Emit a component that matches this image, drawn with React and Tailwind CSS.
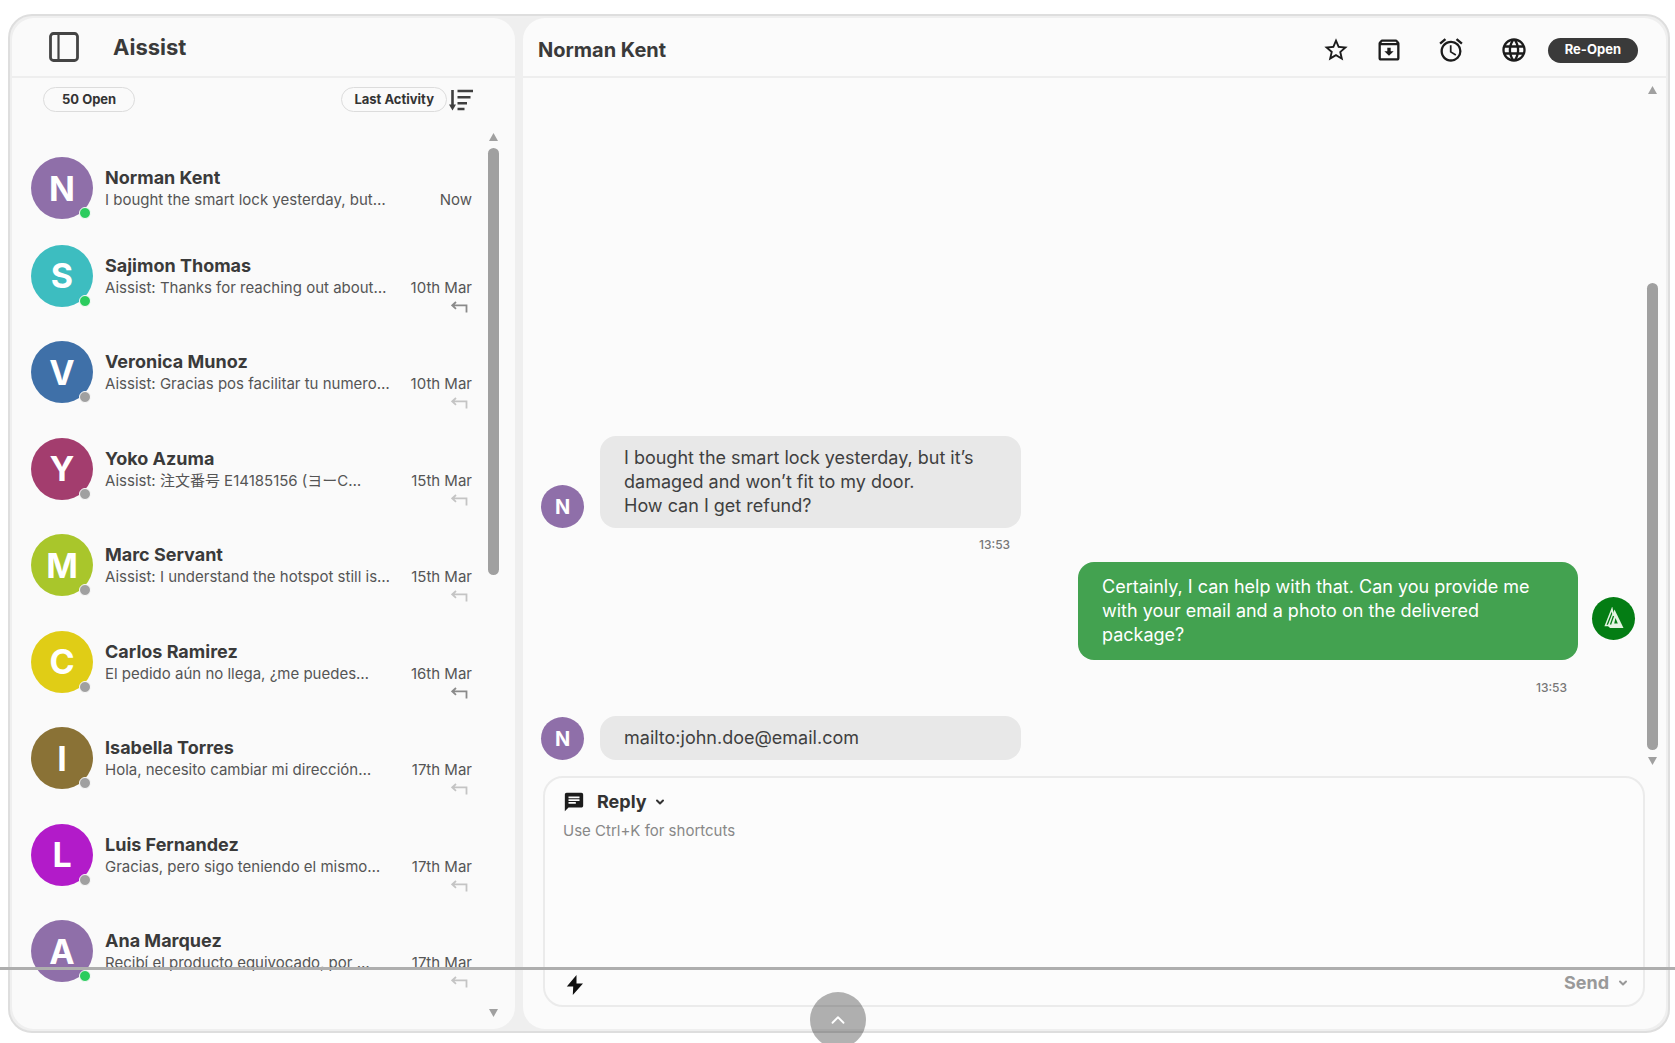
import { MdStarOutline, MdOutlineArchive, MdAlarm, MdLanguage, MdChat } from "react-icons/md";
import { ChevronDown, ChevronUp } from "lucide-react";

const conversations = [
  { name: "Norman Kent", preview: "I bought the smart lock yesterday, but…", date: "Now", color: "bg-[#8f6fa9]", online: true },
  { name: "Sajimon Thomas", preview: "Aissist: Thanks for reaching out about…", date: "10th Mar", color: "bg-[#3dbdc0]", online: true, reply: "text-[#8a8a8a]" },
  { name: "Veronica Munoz", preview: "Aissist: Gracias pos facilitar tu numero…", date: "10th Mar", color: "bg-[#3f70a8]", reply: "text-[#c4c4c4]" },
  { name: "Yoko Azuma", preview: "Aissist: 注文番号 E14185156 (ヨーC…", date: "15th Mar", color: "bg-[#a33d6e]", reply: "text-[#c4c4c4]" },
  { name: "Marc Servant", preview: "Aissist: I understand the hotspot still is…", date: "15th Mar", color: "bg-[#a9c62b]", reply: "text-[#c4c4c4]" },
  { name: "Carlos Ramirez", preview: "El pedido aún no llega, ¿me puedes…", date: "16th Mar", color: "bg-[#e0cd16]", reply: "text-[#8a8a8a]" },
  { name: "Isabella Torres", preview: "Hola, necesito cambiar mi dirección…", date: "17th Mar", color: "bg-[#8a7236]", reply: "text-[#c4c4c4]" },
  { name: "Luis Fernandez", preview: "Gracias, pero sigo teniendo el mismo…", date: "17th Mar", color: "bg-[#b21bc9]", reply: "text-[#c4c4c4]" },
  { name: "Ana Marquez", preview: "Recibí el producto equivocado, por …", date: "17th Mar", color: "bg-[#8f6fa9]", online: true, reply: "text-[#c4c4c4]" },
];

const SidebarIcon = () => (
  <svg width="30" height="30" viewBox="0 0 30 30" fill="none" stroke="#444" strokeWidth="2.8">
    <rect x="1.5" y="1.5" width="27" height="27" rx="3" />
    <path d="M9.5 2v26" strokeWidth="2.2" />
  </svg>
);

const SortIcon = () => (
  <svg width="24" height="22" viewBox="0 0 24 22" fill="none" stroke="#3f3f3f" strokeWidth="2.6">
    <path d="M3.500 1v17" />
    <path d="M0 15.500h7L3.500 21.500z" fill="#3f3f3f" stroke="none" />
    <path d="M8.500 2H24M8.500 8.300h13M8.500 14.300h9.500M8.500 20h7" />
  </svg>
);

const ReplyIcon = ({ className }) => (
  <svg className={className} width="17" height="12" viewBox="0 0 17 12" fill="none" stroke="currentColor" strokeWidth="1.8">
    <path d="M5 1 1.300 4.400 5 7.800M1.500 4.400H15.500V11.500" />
  </svg>
);

const BoltIcon = () => (
  <svg width="18" height="20" viewBox="0 0 18 20" fill="#111">
    <path d="M10.500 0 .8 11.500h6.400L6.800 20 17 8.500h-6.500z" />
  </svg>
);

const LogoIcon = () => (
  <svg width="20" height="23" viewBox="0 0 20 23">
    <path d="M8 2 1.500 18.500h3L9 7z" fill="none" stroke="#e4f4e2" strokeWidth="1.5" />
    <path d="M10.500 2.500 19.500 21H6l-2-2z" fill="#e4f4e2" />
    <path d="M9.500 9 6.500 17.500" stroke="#047d14" strokeWidth="1.300" />
    <path d="M11.500 11l2.300 5.500h-3.600z" fill="#047d14" />
  </svg>
);

const Triangle = ({ down }) => (
  <svg width="9" height="8" viewBox="0 0 9 8" fill="#a0a0a0">
    <path d={down ? "M0 0h9L4.500 8z" : "M4.500 0 9 8H0z"} />
  </svg>
);

const Scrollbar = ({ size, end }) => (
  <div className="flex w-[11px] shrink-0 flex-col items-center gap-[7px]" aria-hidden="true">
    <Triangle />
    <div className={`flex w-full flex-1 flex-col ${end ? "justify-end" : "justify-start"}`}>
      <div className="w-full rounded-full bg-[#a0a0a0]" style={{ height: `${size}%` }} />
    </div>
    <Triangle down />
  </div>
);

const ConversationRow = ({ item }) => (
  <li>
    <a href="#chat" className="flex items-start gap-3">
      <span className={`relative flex size-[62px] shrink-0 items-center justify-center rounded-full text-[34px] font-bold text-white ${item.color}`}>
        {item.name[0]}
        <span className={`absolute right-[2px] bottom-0 size-3 rounded-full border border-[#fafafa] ${item.online ? "bg-[#2bcc5e]" : "bg-[#a0a0a0]"}`} />
      </span>
      <span className="flex min-w-0 flex-1 flex-col pt-[10px] leading-[22px]">
        <span className="text-[18px] font-bold text-[#3a3a3a]">{item.name}</span>
        <span className="flex justify-between text-[15px] whitespace-nowrap text-[#555]">
          <span>{item.preview}</span>
          <span>{item.date}</span>
        </span>
        {item.reply && <ReplyIcon className={`mt-[2px] mr-1 mb-[3px] self-end ${item.reply}`} />}
      </span>
    </a>
  </li>
);

const CustomerMessage = ({ children }) => (
  <div className="flex items-end gap-4">
    <span className="flex size-[43px] shrink-0 items-center justify-center rounded-full bg-[#8f6fa9] text-xl font-bold text-white">N</span>
    <p className="w-[421px] rounded-2xl bg-[#e8e8e8] px-6 py-[10px] text-[18px] leading-6 whitespace-pre-line text-[#3f3f3f]">
      {children}
    </p>
  </div>
);

export default function App() {
  return (
    <div className="relative flex h-screen overflow-hidden bg-white pt-[14px] pr-[5px] pb-[10px] pl-2 font-['Inter','Noto_Sans_CJK_JP',sans-serif]">
      <div className="flex min-w-0 flex-1 gap-2 rounded-[24px] border-2 border-[#dedede] bg-[#efefef] p-[2px]">
        <aside className="flex w-[503px] shrink-0 flex-col rounded-[22px] bg-[#fafafa]">
          <header className="flex h-[60px] shrink-0 items-center gap-[34px] border-b-2 border-[#eeeeee] pl-[37px]">
            <button aria-label="Toggle sidebar">
              <SidebarIcon />
            </button>
            <h1 className="text-[22px] leading-7 font-bold text-[#3a3a3a]">Aissist</h1>
          </header>
          <div className="flex items-center justify-between pt-[9px] pr-[42px] pl-[31px]">
            <button className="h-[25px] rounded-full border border-[#dcdcdc] px-[18px] text-[13px] font-bold text-[#333]">50 Open</button>
            <div className="flex items-center gap-[2px]">
              <button className="h-[25px] rounded-full border border-[#dcdcdc] px-3 text-[13px] font-bold text-[#333]">Last Activity</button>
              <button aria-label="Sort">
                <SortIcon />
              </button>
            </div>
          </div>
          <div className="flex min-h-0 flex-1 gap-4 pt-[21px] pr-4 pb-3 pl-[19px]">
            <ul className="flex flex-1 flex-col justify-between pt-6 pb-[26px]">
              {conversations.map((item) => (
                <ConversationRow key={item.name} item={item} />
              ))}
            </ul>
            <Scrollbar size={50} />
          </div>
        </aside>

        <main id="chat" className="flex min-w-0 flex-1 flex-col rounded-[22px] bg-[#fbfbfb]">
          <header className="flex h-[60px] shrink-0 items-center border-b-2 border-[#eeeeee] pt-[6px] pr-7 pl-[15px]">
            <h2 className="flex-1 text-[20px] font-bold text-[#3a3a3a]">Norman Kent</h2>
            <div className="flex items-center text-[28px] text-[#1c1c1c]">
              <button aria-label="Star" className="mr-[25px]"><MdStarOutline /></button>
              <button aria-label="Archive" className="mr-[34px]"><MdOutlineArchive /></button>
              <button aria-label="Snooze" className="mr-[35px]"><MdAlarm /></button>
              <button aria-label="Language" className="mr-5"><MdLanguage /></button>
            </div>
            <button className="h-[25px] rounded-full bg-[#3a3a3a] px-[17px] text-[13px] font-bold text-white">Re-Open</button>
          </header>

          <div className="flex min-h-0 flex-1 gap-3 pt-2 pr-2 pl-[18px]">
            <div className="flex flex-1 flex-col justify-end pb-4">
              <CustomerMessage>
                {"I bought the smart lock yesterday, but it’s\ndamaged and won’t fit to my door.\nHow can I get refund?"}
              </CustomerMessage>
              <time className="ml-[438px] text-xs leading-[34px] font-medium text-[#777]">13:53</time>
              <div className="flex items-end justify-end gap-[14px]">
                <p className="w-[500px] rounded-2xl bg-[#43a250] px-6 py-[13px] text-[18px] leading-6 text-white">
                  Certainly, I can help with that. Can you provide me with your email and a photo on the delivered package?
                </p>
                <span className="mb-5 flex size-[43px] items-center justify-center rounded-full bg-[#047d14]">
                  <LogoIcon />
                </span>
              </div>
              <time className="mr-[68px] self-end text-xs leading-[56px] font-medium text-[#777]">13:53</time>
              <CustomerMessage>mailto:john.doe@email.com</CustomerMessage>
            </div>
            <div className="flex pb-[11px]">
              <Scrollbar size={72} end />
            </div>
          </div>

          <form className="mr-[21px] mb-[22px] ml-5 flex h-[231px] shrink-0 flex-col rounded-[20px] border-2 border-[#ebebeb] bg-[#fcfcfc] pt-3 pr-[14px] pb-[10px] pl-[18px]">
            <div className="flex items-center">
              <MdChat className="mr-3 text-[22px] text-[#1c1c1c]" />
              <select aria-label="Message type" className="w-[57px] appearance-none text-[18px] leading-6 font-bold text-[#333]">
                <option>Reply</option>
              </select>
              <ChevronDown size={12} strokeWidth={4} className="text-[#333]" />
            </div>
            <textarea
              aria-label="Reply"
              placeholder="Use Ctrl+K for shortcuts"
              className="mt-[7px] flex-1 resize-none text-[15px] leading-5 outline-none placeholder:text-[#888]"
            />
            <div className="flex items-end justify-between">
              <button type="button" aria-label="Quick actions" className="pl-[3px]">
                <BoltIcon />
              </button>
              <button type="button" className="flex items-center gap-2 text-[18px] leading-6 font-bold text-[#999]">
                Send
                <ChevronDown size={12} strokeWidth={4} />
              </button>
            </div>
          </form>
        </main>
      </div>

      <div className="absolute inset-x-0 bottom-[73px] h-[3px] bg-[#aeaeae]" />
      <button aria-label="Expand" className="absolute -bottom-[5px] left-1/2 flex size-14 -translate-x-1/2 items-center justify-center rounded-full bg-black/30 text-white">
        <ChevronUp size={22} />
      </button>
    </div>
  );
}
